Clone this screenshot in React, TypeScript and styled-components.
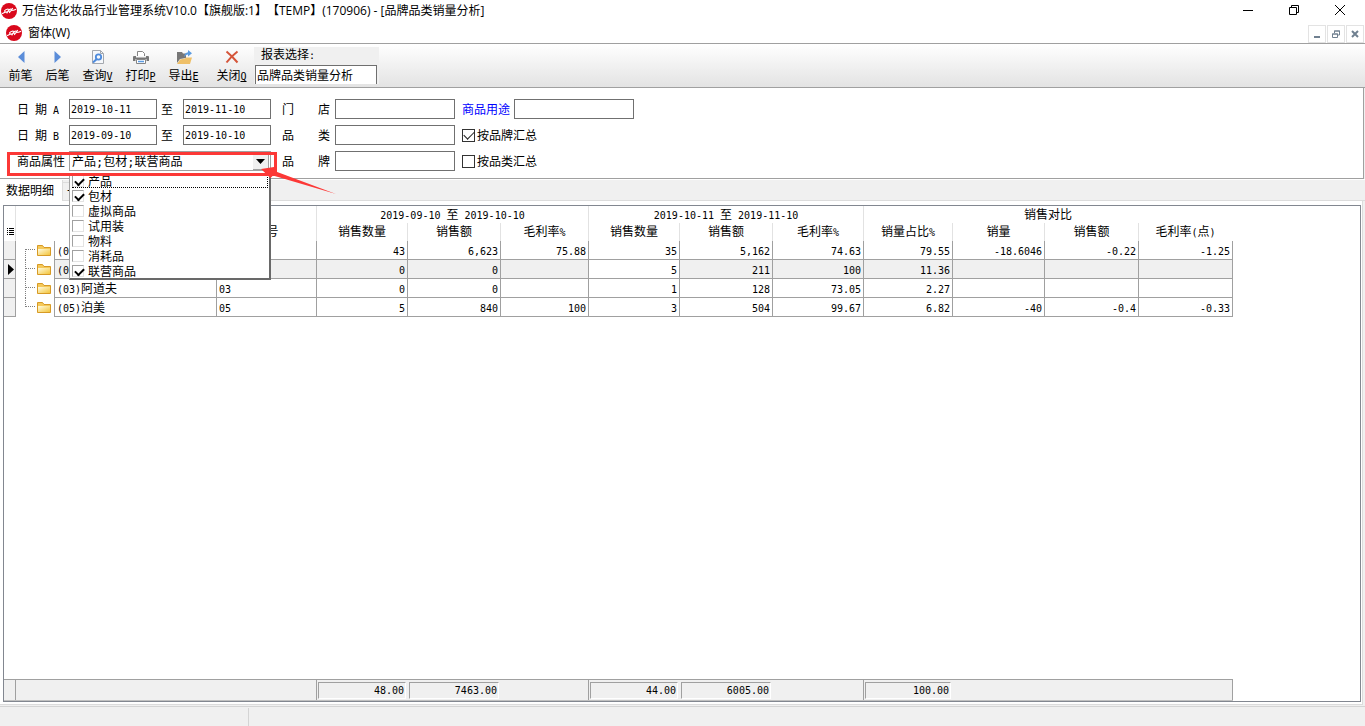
import React from "react";
import styled, { createGlobalStyle } from "styled-components";

const CJK = `"Noto Sans CJK SC", sans-serif`;
const MONO = `"DejaVu Sans Mono", "Noto Sans CJK SC", monospace`;

const GlobalStyle = createGlobalStyle`
  * { box-sizing: border-box; }
  body {
    margin: 0;
    background: #f0f0f0;
    color: #000;
    font: 12px/16px ${CJK};
  }
  button, input, select { font: inherit; color: inherit; }
`;

const Window = styled.div`
  display: flex;
  flex-direction: column;
  min-height: 100vh;
`;

const TitleBar = styled.header`
  display: flex;
  align-items: center;
  height: 22px;
  padding-left: 1px;
  background: #fff;
`;

const Title = styled.h1`
  flex: 1;
  margin: 0 0 0 5px;
  font: 400 12px/22px "Open Sans", ${CJK};
  font-kerning: none;
  text-spacing-trim: space-all;
  white-space: pre;
`;

const CaptionButton = styled.button`
  display: flex;
  align-items: center;
  justify-content: center;
  width: 46px;
  height: 20px;
  padding: 0 4px 2px 0;
  border: 0;
  background: none;
`;

const MenuBar = styled.nav`
  display: flex;
  align-items: center;
  height: 22px;
  padding: 0 1px 0 6px;
  border-bottom: 1px solid #a0a0a0;
  background: #fff;
`;

const MenuItem = styled.button`
  margin: 0 auto 0 6px;
  padding: 0;
  border: 0;
  background: none;
  font-family: "Open Sans", ${CJK};
`;

const ChildButton = styled.button`
  display: flex;
  align-items: center;
  justify-content: center;
  width: 18px;
  height: 18px;
  margin: 2px 0 0 1px;
  padding: 0;
  border: 1px solid #e3e3e3;
  background: #fff;
`;

const Toolbar = styled.div`
  display: flex;
  height: 44px;
  padding-left: 2px;
  border-bottom: 1px solid #a0a0a0;
  background: linear-gradient(#fff, #e3e3e3);
`;

const ToolButton = styled.button<{ $narrow?: boolean; $apart?: boolean }>`
  display: flex;
  flex-direction: column;
  align-items: center;
  width: ${(p) => (p.$narrow ? 37 : 43)}px;
  margin-left: ${(p) => (p.$apart ? 5 : 0)}px;
  padding: 5px 0 0;
  border: 0;
  background: none;
  white-space: nowrap;
  svg { display: block; margin-bottom: 2px; }
`;

const AccessKey = styled.u`
  font: 10px/1 ${MONO};
`;

const Mono = styled.span`
  font: 10px/1 ${MONO};
`;

const ReportPicker = styled.label`
  display: flex;
  flex-direction: column;
  width: 125px;
  height: 37px;
  margin: 3px 0 0 1px;
  padding-left: 1px;
  background: #f0f0f0;
  line-height: 14px;
`;

const ReportCaption = styled.span`
  height: 18px;
  padding-left: 6px;
`;

const ReportInput = styled.input`
  width: 122px;
  height: 19px;
  padding: 0 1px 2px;
  border: 1px solid #6f6f6f;
  border-bottom: 0;
  background: #fff;
  outline: none;
`;

const Filters = styled.form`
  display: grid;
  grid-template-columns: 52px 88px 26px 88px 64px 120px auto;
  grid-auto-rows: 20px;
  justify-content: start;
  align-items: center;
  row-gap: 6px;
  margin-right: 1px;
  padding: 11px 0 7px 17px;
  border-right: 1px solid #a0a0a0;
  border-bottom: 1px solid #a0a0a0;
  background: #fff;
`;

const DateLabel = styled.label`
  display: flex;
  align-items: baseline;
  gap: 6px;
`;

const To = styled.label`
  padding-left: 4px;
`;

const PairLabel = styled.label`
  display: flex;
  justify-content: space-between;
  padding: 0 5px 0 11px;
`;

const TextBox = styled.input`
  width: 100%;
  height: 20px;
  padding: 0 1px;
  border: 1px solid #707070;
  background: #fff;
  font: 10px/16px ${MONO};
  outline: none;
`;

const Extra = styled.div`
  display: flex;
  align-items: center;
  gap: 4px;
  padding-left: 7px;
`;

const PurposeLabel = styled.label`
  color: #00f;
`;

const PurposeBox = styled(TextBox)`
  width: 120px;
`;

const CheckLabel = styled.label`
  display: flex;
  align-items: center;
  gap: 2px;
`;

const Check = styled.input`
  appearance: none;
  display: grid;
  place-content: center;
  width: 13px;
  height: 13px;
  margin: 0;
  border: 1px solid #333;
  background: #fff;
  &:checked::before {
    content: "";
    width: 9px;
    height: 5px;
    margin-top: -3px;
    border-left: 1px solid #222;
    border-bottom: 1px solid #222;
    rotate: -45deg;
  }
`;

const Combo = styled.div`
  position: relative;
  grid-column: 2 / 5;
  height: 20px;
`;

const ComboSelect = styled.select`
  appearance: none;
  display: block;
  width: 100%;
  height: 20px;
  padding: 1px 20px 0 2px;
  border: 1px solid #a0a0a0;
  border-radius: 0;
  background: #fff;
  font: 12px/18px ${MONO};
  outline: none;
`;

const ComboArrow = styled.span`
  position: absolute;
  top: 2px;
  right: 2px;
  display: grid;
  place-content: center;
  width: 16px;
  height: 17px;
  border-right: 1px solid #a0a0a0;
  border-bottom: 1px solid #a0a0a0;
  background: #f0f0f0;
  pointer-events: none;
`;

const Options = styled.fieldset`
  position: absolute;
  z-index: 1;
  top: 22px;
  left: 0;
  width: 202px;
  margin: 0;
  padding: 0 1px 0 2px;
  border: 1px solid #696969;
  border-top-width: 0;
  border-right-width: 2px;
  border-bottom-width: 2px;
  border-left-color: #a0a0a0;
  background: #fff;
`;

const Option = styled.label<{ $focused?: boolean }>`
  display: flex;
  align-items: center;
  gap: 4px;
  height: 15px;
  line-height: 14px;
  outline: ${(p) => (p.$focused ? "1px dotted #000" : "none")};
  outline-offset: -1px;
`;

const OptionCheck = styled.input`
  appearance: none;
  position: relative;
  width: 12px;
  height: 12px;
  margin: 0;
  border: 1px solid #e3e3e3;
  border-top-color: #a0a0a0;
  border-left-color: #a0a0a0;
  background: #fff;
  &:checked::before {
    content: "";
    position: absolute;
    top: 2px;
    left: 2px;
    width: 7px;
    height: 4px;
    border-left: 2px solid #000;
    border-bottom: 2px solid #000;
    rotate: -45deg;
  }
`;

const Highlight = styled.div`
  position: absolute;
  z-index: 2;
  top: 1px;
  left: -62px;
  width: 270px;
  height: 24px;
  border: 3px solid #fc3836;
  pointer-events: none;
`;

const Pointer = styled.svg`
  position: absolute;
  z-index: 2;
  top: 14px;
  left: 188px;
  pointer-events: none;
`;

const Tabs = styled.div`
  display: flex;
  align-items: flex-end;
  height: 22px;
  border-top: 1px solid #fff;
  box-shadow: inset 0 -1px #dcdcdc;
`;

const Tab = styled.button<{ $active?: boolean }>`
  height: ${(p) => (p.$active ? 21 : 19)}px;
  padding: 0 8px 2px ${(p) => (p.$active ? 6 : 4)}px;
  border: 0 solid #dcdcdc;
  border-width: ${(p) => (p.$active ? "0 1px 0 0" : "1px 1px 1px 0")};
  background: ${(p) => (p.$active ? "#fff" : "#f0f0f0")};
  line-height: 16px;
`;

const Panel = styled.main`
  display: flex;
  flex: 1;
  margin-right: 2px;
  padding: 4px 1px 2px 3px;
  border-right: 1px solid #dcdcdc;
  border-bottom: 1px solid #dcdcdc;
  background: #fff;
`;

const GridFrame = styled.div`
  display: flex;
  flex: 1;
  flex-direction: column;
  justify-content: space-between;
  border: 1px solid #828790;
`;

const Grid = styled.table`
  width: 1229px;
  table-layout: fixed;
  border-collapse: separate;
  border-spacing: 0;
`;

const HeadCell = styled.th<{ $edge?: boolean }>`
  padding: 0;
  border-right: 1px solid ${(p) => (p.$edge === false ? "transparent" : "#e2e2e2")};
  font-weight: 400;
  line-height: 16px;
  text-align: center;
  vertical-align: top;
`;

const LowHeadCell = styled(HeadCell)`
  padding-bottom: 2px;
  vertical-align: bottom;
  svg { display: block; margin: 0 0 3px 3px; }
`;

const HeadRow = styled.tr<{ $lower?: boolean }>`
  height: ${(p) => (p.$lower ? 18 : 17)}px;
`;

const BodyRow = styled.tr<{ $current?: boolean }>`
  height: 19px;
  --fill: ${(p) => (p.$current ? "#f0f0f0" : "#fff")};
`;

const Cell = styled.td<{ $text?: boolean; $focused?: boolean }>`
  padding: 0 ${(p) => (p.$text ? 0 : 2)}px 0 ${(p) => (p.$text ? 2 : 0)}px;
  border-right: 1px solid #a0a0a0;
  border-bottom: 1px solid #a0a0a0;
  background: ${(p) => (p.$focused ? "#fff" : "var(--fill)")};
  text-align: ${(p) => (p.$text ? "left" : "right")};
  line-height: 16px;
  white-space: nowrap;
`;

const MarkCell = styled(Cell)`
  padding: 0;
  background: #f0f0f0;
  svg { display: block; margin-left: 4px; }
`;

const TreeCell = styled.td`
  padding: 0;
  border-right: 1px solid #a0a0a0;
  svg { display: block; }
`;

const SumCell = styled.td<{ $edge?: boolean }>`
  height: 20px;
  padding: 2px 1px 1px;
  border-right: 1px solid ${(p) => (p.$edge ? "#a0a0a0" : "#f0f0f0")};
  background: #f0f0f0;
`;

const SumTable = styled(Grid)`
  border-top: 1px solid #a0a0a0;
  border-bottom: 1px solid #c0c0c0;
`;

const Sum = styled.div`
  height: 17px;
  padding-right: 1px;
  border: 1px solid #fff;
  border-top-color: #a0a0a0;
  border-left-color: #a0a0a0;
  font: 10px/15px ${MONO};
  text-align: right;
`;

const StatusBar = styled.footer`
  display: flex;
  height: 20px;
  margin-top: 1px;
  padding-top: 1px;
  border-top: 1px solid #d4d4d4;
`;

const StatusPane = styled.div`
  width: 249px;
  border-right: 1px solid #d4d4d4;
`;

const Logo = () => (
  <svg width="16" height="16" viewBox="0 0 16 16" aria-hidden="true">
    <circle cx="8" cy="8" r="8" fill="#d9081c" />
    <path d="M1.500 10.500l3-1.500M3.500 8c1-1.800 4.500-2.500 4.500-1 0 1.600-3.500 3-4 1.600M6 10c1-2.500 2.500-4 4-4 1.300 0 .3 2.200-1.300 2.400M10 7.500c1 0 3.500-.4 4.500-1M11.500 5.500l-3 4" fill="none" stroke="#fff" strokeWidth="1.200" strokeLinecap="round" />
  </svg>
);

const icons: Record<string, React.ReactNode> = {
  prev: <path d="M11.500 2v12L5 8z" fill="#5b8dd9" />,
  next: <path d="M4.500 2v12L11 8z" fill="#5b8dd9" />,
  query: (
    <g fill="none">
      <path d="M2.500 1.500h8l3 3v10h-11z" fill="#f6f8fb" stroke="#a4a8ae" />
      <path d="M10.500 1.500v3h3" stroke="#a4a8ae" />
      <circle cx="8.500" cy="8" r="2.700" stroke="#4f8bdc" strokeWidth="1.800" />
      <path d="M6.500 10.200L3 13.500" stroke="#4f8bdc" strokeWidth="2" />
    </g>
  ),
  print: (
    <g>
      <path d="M4.500 7V2.500h5l2 2V7" fill="#fff" stroke="#858585" />
      <path d="M1 7h2v1.500h10V7h2q1 0 1 1v4h-2.500v-2h-11v2H0V8q0-1 1-1z" fill="#777" />
      <path d="M3.500 10.500h9v4h-9z" fill="#fff" stroke="#858585" />
      <path d="M5 12.500h6" stroke="#5b9be0" strokeWidth="1.500" />
    </g>
  ),
  exporting: (
    <g>
      <path d="M1 3h5l1 1.500h3V9L4 10l-3 4z" fill="#777" />
      <path d="M4 10.500l5-1 1-1h6l-2 6.500H1z" fill="#efc069" />
      <path d="M8 8c.5-3 2-4.500 4-4.700V1l4 3.200-4 3.300V5.600C10.500 5.700 9.500 6.500 8 8z" fill="#5b9be0" />
    </g>
  ),
  close: <path d="M2.500 2.500q6 5 11 11M13.500 2.500q-6.500 5-11 11" stroke="#d5553a" strokeWidth="2" fill="none" />,
};

const ToolIcon = ({ name }: { name: string }) => (
  <svg width="16" height="16" viewBox="0 0 16 16" aria-hidden="true">
    {icons[name]}
  </svg>
);

const TreeNode = ({ last, first }: { last: boolean; first: boolean }) => (
  <svg width="38" height="19" viewBox="0 0 38 19" aria-hidden="true">
    <defs>
      <linearGradient id="folder" x1="0" y1="0" x2="1" y2="1">
        <stop offset="0" stopColor="#fffbe0" />
        <stop offset="1" stopColor="#f3c53c" />
      </linearGradient>
    </defs>
    <path d={`M9.500 ${first ? 8 : 0}V${last ? 9 : 19}M10 8.500h9`} stroke="#808080" strokeDasharray="1 1" fill="none" />
    <path d="M21.500 14.500v-10h5l1.500 2h6.500v8z" fill="#f5c95a" stroke="#d79a25" />
    <path d="M22 14V8h12v6z" fill="url(#folder)" />
  </svg>
);

const Columns = () => (
  <colgroup>
    {[12, 39, 162, 100, 91, 93, 88, 91, 93, 91, 89, 92, 94, 94].map((w, i) => (
      <col key={i} width={w} />
    ))}
  </colgroup>
);

const rows = [
  { id: "01", name: "", values: ["43", "6,623", "75.88", "35", "5,162", "74.63", "79.55", "-18.6046", "-0.22", "-1.25"] },
  { id: "02", name: "", current: true, values: ["0", "0", "", "5", "211", "100", "11.36", "", "", ""] },
  { id: "03", name: "阿道夫", values: ["0", "0", "", "1", "128", "73.05", "2.27", "", "", ""] },
  { id: "05", name: "泊美", values: ["5", "840", "100", "3", "504", "99.67", "6.82", "-40", "-0.4", "-0.33"] },
];

const sums = ["48.00", "7463.00", "", "44.00", "6005.00", "", "100.00", "", "", ""];

const attributes: [string, boolean][] = [
  ["产品", true],
  ["包材", true],
  ["虚拟商品", false],
  ["试用装", false],
  ["物料", false],
  ["消耗品", false],
  ["联营商品", true],
];

const Percent = () => <Mono>%</Mono>;

export default function App() {
  return (
    <Window>
      <GlobalStyle />
      <TitleBar>
        <Logo />
        <Title>万信达化妆品行业管理系统V10.0【旗舰版:1】【TEMP】(170906) - [品牌品类销量分析]</Title>
        <CaptionButton aria-label="最小化">
          <svg width="12" height="12"><path d="M1 6.500h10" stroke="#000" /></svg>
        </CaptionButton>
        <CaptionButton aria-label="还原">
          <svg width="12" height="12"><path d="M1.500 3.500h7v7h-7zM3.500 3V1.500h7v7H9" stroke="#000" fill="none" /></svg>
        </CaptionButton>
        <CaptionButton aria-label="关闭">
          <svg width="12" height="12"><path d="M1 1l10 10M11 1L1 11" stroke="#000" /></svg>
        </CaptionButton>
      </TitleBar>

      <MenuBar>
        <Logo />
        <MenuItem>窗体(W)</MenuItem>
        <ChildButton aria-label="最小化窗体">
          <svg width="10" height="10"><path d="M2 8h6" stroke="#708090" strokeWidth="2" /></svg>
        </ChildButton>
        <ChildButton aria-label="还原窗体">
          <svg width="10" height="10"><path d="M1.500 5h5v3.500h-5zM1 5h6M3.500 4V2h5v4H7M3 2h6" stroke="#708090" fill="none" /></svg>
        </ChildButton>
        <ChildButton aria-label="关闭窗体">
          <svg width="10" height="10"><path d="M2 2l6 6M8 2L2 8" stroke="#708090" strokeWidth="2" /></svg>
        </ChildButton>
      </MenuBar>

      <Toolbar>
        <ToolButton $narrow><ToolIcon name="prev" /><span>前笔</span></ToolButton>
        <ToolButton $narrow><ToolIcon name="next" /><span>后笔</span></ToolButton>
        <ToolButton><ToolIcon name="query" /><span>查询<AccessKey>V</AccessKey></span></ToolButton>
        <ToolButton><ToolIcon name="print" /><span>打印<AccessKey>P</AccessKey></span></ToolButton>
        <ToolButton><ToolIcon name="exporting" /><span>导出<AccessKey>E</AccessKey></span></ToolButton>
        <ToolButton $apart><ToolIcon name="close" /><span>关闭<AccessKey>Q</AccessKey></span></ToolButton>
        <ReportPicker>
          <ReportCaption>报表选择<Mono>:</Mono></ReportCaption>
          <ReportInput defaultValue="品牌品类销量分析" />
        </ReportPicker>
      </Toolbar>

      <Filters>
        <DateLabel htmlFor="a-from"><span>日</span><span>期</span><Mono>A</Mono></DateLabel>
        <TextBox id="a-from" defaultValue="2019-10-11" />
        <To htmlFor="a-to">至</To>
        <TextBox id="a-to" defaultValue="2019-11-10" />
        <PairLabel htmlFor="shop"><span>门</span><span>店</span></PairLabel>
        <TextBox id="shop" />
        <Extra>
          <PurposeLabel htmlFor="purpose">商品用途</PurposeLabel>
          <PurposeBox id="purpose" />
        </Extra>

        <DateLabel htmlFor="b-from"><span>日</span><span>期</span><Mono>B</Mono></DateLabel>
        <TextBox id="b-from" defaultValue="2019-09-10" />
        <To htmlFor="b-to">至</To>
        <TextBox id="b-to" defaultValue="2019-10-10" />
        <PairLabel htmlFor="category"><span>品</span><span>类</span></PairLabel>
        <TextBox id="category" />
        <Extra>
          <CheckLabel><Check type="checkbox" defaultChecked />按品牌汇总</CheckLabel>
        </Extra>

        <label htmlFor="attribute">商品属性</label>
        <Combo>
          <ComboSelect id="attribute">
            <option>产品;包材;联营商品</option>
          </ComboSelect>
          <ComboArrow>
            <svg width="9" height="5"><path d="M0 0h9L4.500 5z" /></svg>
          </ComboArrow>
          <Options aria-label="商品属性">
            {attributes.map(([name, on], i) => (
              <Option key={name} $focused={i === 0}>
                <OptionCheck type="checkbox" defaultChecked={on} />
                {name}
              </Option>
            ))}
          </Options>
          <Highlight />
          <Pointer width="80" height="32" viewBox="0 0 80 32" aria-hidden="true">
            <path d="M4 4l13-2 .5 4L79 29 16 10.500l-2.500 2.500z" fill="#fc3836" />
          </Pointer>
        </Combo>
        <PairLabel htmlFor="brand"><span>品</span><span>牌</span></PairLabel>
        <TextBox id="brand" />
        <Extra>
          <CheckLabel><Check type="checkbox" />按品类汇总</CheckLabel>
        </Extra>
      </Filters>

      <Tabs role="tablist">
        <Tab role="tab" aria-selected $active>数据明细</Tab>
        <Tab role="tab">卡片</Tab>
      </Tabs>

      <Panel>
        <GridFrame>
          <Grid>
            <Columns />
            <thead>
              <HeadRow>
                <LowHeadCell rowSpan={2}>
                  <svg width="7" height="9" aria-hidden="true">
                    <path d="M0 1.500h1M2 1.500h5M0 3.500h1M2 3.500h5M0 5.500h1M2 5.500h5M0 7.500h1M2 7.500h5" stroke="#000" />
                  </svg>
                </LowHeadCell>
                <LowHeadCell rowSpan={2} colSpan={2} />
                <LowHeadCell rowSpan={2}>编号</LowHeadCell>
                <HeadCell colSpan={3}><Mono>2019-09-10 </Mono>至<Mono> 2019-10-10</Mono></HeadCell>
                <HeadCell colSpan={3}><Mono>2019-10-11 </Mono>至<Mono> 2019-11-10</Mono></HeadCell>
                <HeadCell colSpan={4} $edge={false}>销售对比</HeadCell>
              </HeadRow>
              <HeadRow $lower>
                <LowHeadCell>销售数量</LowHeadCell>
                <LowHeadCell>销售额</LowHeadCell>
                <LowHeadCell>毛利率<Percent /></LowHeadCell>
                <LowHeadCell>销售数量</LowHeadCell>
                <LowHeadCell>销售额</LowHeadCell>
                <LowHeadCell>毛利率<Percent /></LowHeadCell>
                <LowHeadCell>销量占比<Percent /></LowHeadCell>
                <LowHeadCell>销量</LowHeadCell>
                <LowHeadCell>销售额</LowHeadCell>
                <LowHeadCell $edge={false}>毛利率<Mono>(</Mono>点<Mono>)</Mono></LowHeadCell>
              </HeadRow>
            </thead>
            <tbody>
              {rows.map((row, r) => (
                <BodyRow key={row.id} $current={row.current}>
                  <MarkCell>
                    {row.current && (
                      <svg width="6" height="11" aria-hidden="true"><path d="M0 0v11l6-5.500z" /></svg>
                    )}
                  </MarkCell>
                  <TreeCell><TreeNode first={r === 0} last={r === rows.length - 1} /></TreeCell>
                  <Cell $text><Mono>({row.id})</Mono>{row.name}</Cell>
                  <Cell $text><Mono>{row.id}</Mono></Cell>
                  {row.values.map((v, i) => (
                    <Cell key={i} $focused={row.current && i === 3}><Mono>{v}</Mono></Cell>
                  ))}
                </BodyRow>
              ))}
            </tbody>
          </Grid>
          <SumTable aria-label="合计">
            <Columns />
            <tbody>
              <tr>
                <SumCell $edge />
                <SumCell colSpan={3} $edge />
                {sums.map((v, i) => (
                  <SumCell key={i} $edge={i === 2 || i === 5 || i === 9}>{v && <Sum>{v}</Sum>}</SumCell>
                ))}
              </tr>
            </tbody>
          </SumTable>
        </GridFrame>
      </Panel>

      <StatusBar>
        <StatusPane />
      </StatusBar>
    </Window>
  );
}
